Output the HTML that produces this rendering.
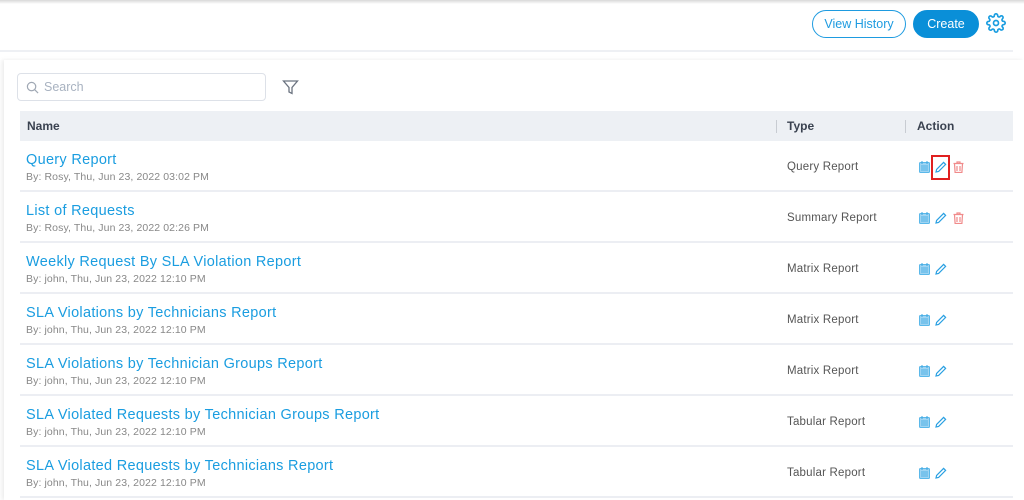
<!DOCTYPE html>
<html><head><style>
*{margin:0;padding:0;box-sizing:border-box}
body{width:1024px;height:500px;overflow:hidden;background:#fff;font-family:"Liberation Sans",sans-serif;position:relative}
.topshadow{position:absolute;left:0;top:0;width:1024px;height:4px;background:linear-gradient(#d8d8d8,#fff)}
.hline{position:absolute;left:0;top:50px;width:1013px;height:2px;background:#eef0f4}
.btn{position:absolute;top:10px;height:28px;border-radius:14px;font-size:12.5px;text-align:center;line-height:26px}
.vh{left:812px;width:94px;border:1px solid #1e9be0;color:#1e9be0;background:#fff}
.cr{left:913px;width:66px;background:#0a8fd8;color:#fff;border:1px solid #0a8fd8}
.card{position:absolute;left:4px;top:60px;width:1020px;height:440px;box-shadow:-2px 0 4px rgba(0,0,0,.08)}
.search{position:absolute;left:17px;top:73px;width:249px;height:28px;border:1px solid #dde1e8;border-radius:4px}
.search span{position:absolute;left:26px;top:6px;font-size:12.5px;color:#a8b2c0}
.th{position:absolute;left:20px;top:111px;width:993px;height:30px;background:#edf0f4;font-size:12px;color:#3a4250;font-weight:bold}
.th span{position:absolute;top:8px}
.sep{position:absolute;top:9px;width:1px;height:13px;background:#c8ccd2}
.row{position:absolute;left:20px;width:993px;height:51px;border-bottom:2px solid #eceef3}
.n{position:absolute;left:6px;top:11px;font-size:14.5px;color:#1a9de0;letter-spacing:.3px}
.by{position:absolute;left:6px;top:30px;font-size:10.5px;color:#888;letter-spacing:.1px}
.ty{position:absolute;left:767px;top:20px;font-size:11.5px;color:#555;letter-spacing:.2px}
.ic{position:absolute;top:20px}
</style></head><body>
<div class="topshadow"></div>
<div class="btn vh">View History</div>
<div class="btn cr">Create</div>
<svg style="position:absolute;left:986px;top:13px" width="20" height="20" viewBox="0 0 24 24" fill="none" stroke="#1a9de0" stroke-width="2"><circle cx="12" cy="12" r="3"/><path d="M19.4 15a1.7 1.7 0 0 0 .3 1.8l.1.1a2 2 0 1 1-2.8 2.8l-.1-.1a1.7 1.7 0 0 0-1.8-.3 1.7 1.7 0 0 0-1 1.5V21a2 2 0 1 1-4 0v-.1a1.7 1.7 0 0 0-1.1-1.5 1.7 1.7 0 0 0-1.8.3l-.1.1a2 2 0 1 1-2.8-2.8l.1-.1a1.7 1.7 0 0 0 .3-1.800 1.7 1.7 0 0 0-1.5-1H3a2 2 0 1 1 0-4h.1a1.7 1.7 0 0 0 1.5-1.1 1.7 1.7 0 0 0-.3-1.8l-.1-.1a2 2 0 1 1 2.8-2.8l.1.1a1.7 1.7 0 0 0 1.8.3H9a1.7 1.7 0 0 0 1-1.5V3a2 2 0 1 1 4 0v.1a1.7 1.7 0 0 0 1 1.5 1.7 1.7 0 0 0 1.8-.3l.1-.1a2 2 0 1 1 2.8 2.8l-.1.1a1.7 1.7 0 0 0-.3 1.8V9a1.7 1.7 0 0 0 1.5 1H21a2 2 0 1 1 0 4h-.1a1.7 1.7 0 0 0-1.5 1z"/></svg>
<div class="hline"></div>
<div class="card"></div>
<div class="search"><svg style="position:absolute;left:8px;top:7px" width="13" height="13" viewBox="0 0 14 14" fill="none" stroke="#a0a8b4" stroke-width="1.3"><circle cx="6" cy="6" r="4.5"/><path d="M9.5 9.5L13 13"/></svg><span>Search</span></div>
<svg style="position:absolute;left:282px;top:79px" width="17" height="17" viewBox="0 0 17 17" fill="none" stroke="#6b7380" stroke-width="1.3"><path d="M1.5 2h14l-5.5 6.5v6l-3-1.5v-4.5z"/></svg>
<div class="th"><span style="left:7px">Name</span><div class="sep" style="left:756px"></div><span style="left:767px">Type</span><div class="sep" style="left:885px"></div><span style="left:897px">Action</span></div>
<div id="rows"></div>
<script>
var d=[["Query Report","Rosy","03:02 PM","Query Report",1],["List of Requests","Rosy","02:26 PM","Summary Report",1],["Weekly Request By SLA Violation Report","john","12:10 PM","Matrix Report",0],["SLA Violations by Technicians Report","john","12:10 PM","Matrix Report",0],["SLA Violations by Technician Groups Report","john","12:10 PM","Matrix Report",0],["SLA Violated Requests by Technician Groups Report","john","12:10 PM","Tabular Report",0],["SLA Violated Requests by Technicians Report","john","12:10 PM","Tabular Report",0]];
var h="";
d.forEach(function(r,i){
var cal='<svg class="ic" style="left:899px" width="11" height="12" viewBox="0 0 11 12"><rect x="0.5" y="1.5" width="10" height="10" rx="1" fill="#9fd4f2" stroke="#5ab8ea"/><path d="M2 5h7M2 7h7M2 9h7" stroke="#3aa6e2" stroke-width=".8"/><path d="M3 0v3M8 0v3" stroke="#3aa6e2"/></svg>';
var pen='<svg class="ic" style="left:915px" width="12" height="12" viewBox="0 0 12 12" fill="none" stroke="#2aa0e2" stroke-width="1.2"><path d="M1 11l.6-2.6L8.6 1.4l2 2-7 7z"/></svg>';
var del=r[4]?'<svg class="ic" style="left:933px" width="11" height="12" viewBox="0 0 11 12" fill="none" stroke="#f08a8a" stroke-width="1.2"><path d="M0.5 2.5h10M4 2.5V1h3v1.5M1.5 2.5l.6 9h6.8l.6-9M4 5v5M7 5v5"/></svg>':'';
var box=i==0?'<div style="position:absolute;left:911px;top:14px;width:19px;height:25px;border:2px solid #e02020"></div>':'';
h+='<div class="row" style="top:'+(141+i*51)+'px"><div class="n">'+r[0]+'</div><div class="by">By: '+r[1]+', Thu, Jun 23, 2022 '+r[2]+'</div><div class="ty">'+r[3]+'</div>'+cal+pen+del+box+'</div>';
});
document.getElementById("rows").innerHTML=h;
</script>
</body></html>
